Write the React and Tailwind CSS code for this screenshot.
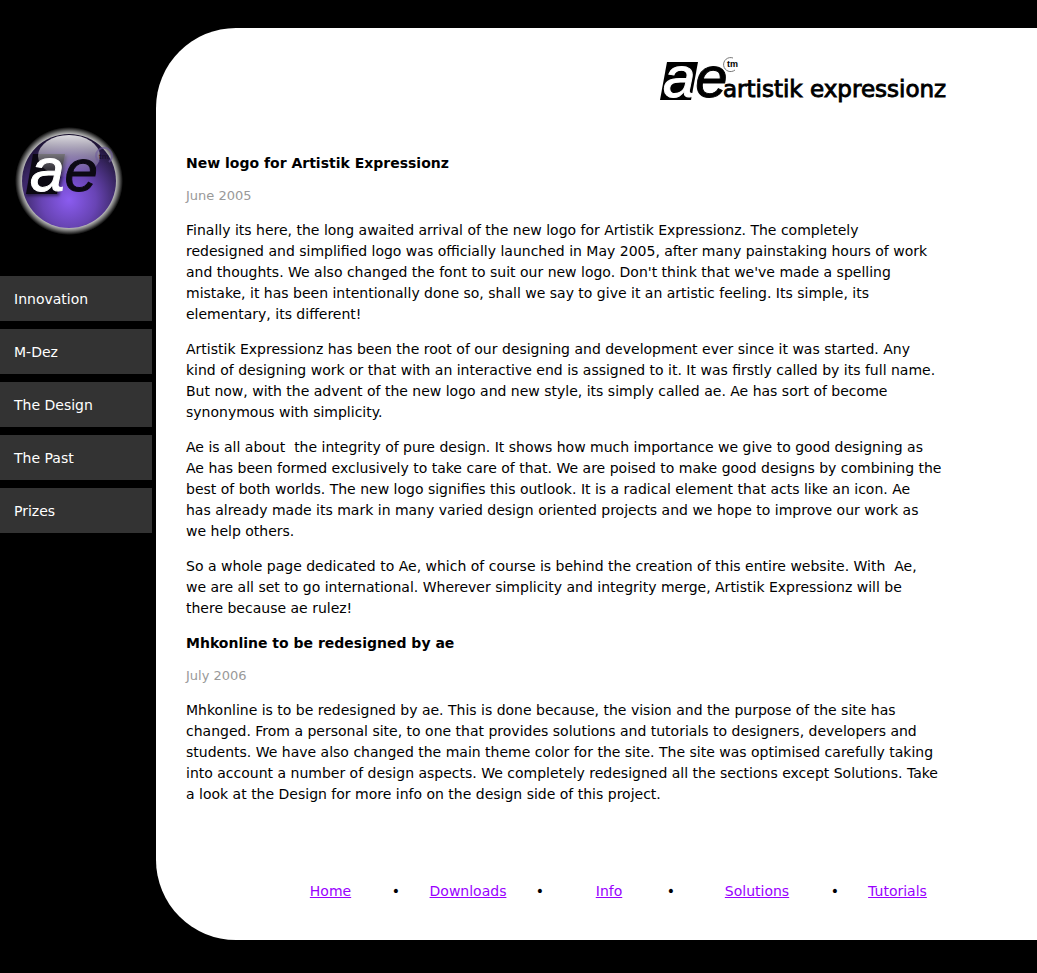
const sections = ["Innovation", "M-Dez", "The Design", "The Past", "Prizes"];

const articles = [
  {
    title: "New logo for Artistik Expressionz",
    date: "June 2005",
    paragraphs: [
      "Finally its here, the long awaited arrival of the new logo for Artistik Expressionz. The completely\nredesigned and simplified logo was officially launched in May 2005, after many painstaking hours of work\nand thoughts. We also changed the font to suit our new logo. Don't think that we've made a spelling\nmistake, it has been intentionally done so, shall we say to give it an artistic feeling. Its simple, its\nelementary, its different!",
      "Artistik Expressionz has been the root of our designing and development ever since it was started. Any\nkind of designing work or that with an interactive end is assigned to it. It was firstly called by its full name.\nBut now, with the advent of the new logo and new style, its simply called ae. Ae has sort of become\nsynonymous with simplicity.",
      "Ae is all about\u00a0 the integrity of pure design. It shows how much importance we give to good designing as\nAe has been formed exclusively to take care of that. We are poised to make good designs by combining the\nbest of both worlds. The new logo signifies this outlook. It is a radical element that acts like an icon. Ae\nhas already made its mark in many varied design oriented projects and we hope to improve our work as\nwe help others.",
      "So a whole page dedicated to Ae, which of course is behind the creation of this entire website. With\u00a0 Ae,\nwe are all set to go international. Wherever simplicity and integrity merge, Artistik Expressionz will be\nthere because ae rulez!",
    ],
  },
  {
    title: "Mhkonline to be redesigned by ae",
    date: "July 2006",
    paragraphs: [
      "Mhkonline is to be redesigned by ae. This is done because, the vision and the purpose of the site has\nchanged. From a personal site, to one that provides solutions and tutorials to designers, developers and\nstudents. We have also changed the main theme color for the site. The site was optimised carefully taking\ninto account a number of design aspects. We completely redesigned all the sections except Solutions. Take\na look at the Design for more info on the design side of this project.",
    ],
  },
];

const footerLinks = ["Home", "Downloads", "Info", "Solutions", "Tutorials"];

function Orb() {
  return (
    <svg width="120" height="120" viewBox="0 0 120 120" role="img" aria-label="ae">
      <defs>
        <radialGradient id="halo">
          <stop offset="0.86" stopColor="#c8c8c8" />
          <stop offset="0.92" stopColor="#777" />
          <stop offset="1" stopColor="#000" />
        </radialGradient>
        <radialGradient id="ball" cx="0.5" cy="0.7" r="0.72">
          <stop offset="0" stopColor="#8b5cf0" />
          <stop offset="0.4" stopColor="#6844b4" />
          <stop offset="0.8" stopColor="#2e1f50" />
          <stop offset="1" stopColor="#140c26" />
        </radialGradient>
        <linearGradient id="gloss" x1="0" y1="0" x2="0" y2="1">
          <stop offset="0" stopColor="#fff" stopOpacity="0.85" />
          <stop offset="0.5" stopColor="#fff" stopOpacity="0.4" />
          <stop offset="1" stopColor="#fff" stopOpacity="0.04" />
        </linearGradient>
        <filter id="soft" x="-20%" y="-20%" width="140%" height="140%">
          <feGaussianBlur stdDeviation="1.5" />
        </filter>
      </defs>
      <circle cx="59" cy="61" r="54" fill="url(#halo)" />
      <circle cx="59" cy="61" r="47" fill="url(#ball)" />
      <path d="M24 35 L57 35 L49 76 L16 76 Z" fill="#000" opacity="0.5" filter="url(#soft)" />
      <path d="M23 34 L55 34 L47 74 L16 74 Z" fill="#0b0812" />
      <ellipse cx="59" cy="36" rx="31" ry="21" fill="url(#gloss)" />
      <text x="20" y="71" fontFamily="Liberation Sans, sans-serif" fontStyle="italic" fontSize="62" fill="#fff" stroke="#fff" strokeWidth="1">
        a<tspan fontSize="60" fill="#0c0914" stroke="#0c0914" strokeWidth="1">e</tspan>
      </text>
      <path d="M89 42 A8 8 0 1 1 99 42" fill="none" stroke="#6e5a9c" strokeWidth="2" opacity="0.6" />
      <text x="89" y="39" fontFamily="Liberation Sans, sans-serif" fontWeight="bold" fontSize="8" fill="#1b1230">tm</text>
    </svg>
  );
}

function Wordmark() {
  return (
    <svg width="292" height="86" viewBox="4 -21 292 86" role="img" aria-label="ae artistik expressionz">
      <path d="M14 5 L45 5 L38 43 L7 43 Z" fill="#000" />
      <text x="10" y="40" fontFamily="Liberation Sans, sans-serif" fontStyle="italic" fontSize="58" fill="#fff" stroke="#fff" strokeWidth="1">
        a<tspan fill="#000" stroke="#000" strokeWidth="1">e</tspan>
      </text>
      <path d="M80 1 A7 7 0 1 0 82 13" fill="none" stroke="#777" strokeWidth="1" />
      <text x="74" y="10" fontFamily="Liberation Sans, sans-serif" fontWeight="bold" fontSize="9" fill="#000">tm</text>
      <text x="70" y="40" fontFamily="DejaVu Sans, sans-serif" fontSize="23" fill="#000" stroke="#000" strokeWidth="0.9">artistik expressionz</text>
    </svg>
  );
}

export default function App() {
  return (
    <div className="flex min-h-screen bg-black pt-7 pb-[33px] font-['Verdana','DejaVu_Sans',sans-serif] text-[14px] leading-[21px] text-black">
      <aside className="w-[156px] shrink-0 pt-[92px]">
        <div className="pl-[10px]">
          <Orb />
        </div>
        <nav aria-label="Sections" className="mt-9 mr-1 flex flex-col gap-2">
          {sections.map((name) => (
            <a key={name} href="#" className="bg-[#333] px-[14px] pt-[13px] pb-[11px] text-white">
              {name}
            </a>
          ))}
        </nav>
      </aside>
      <div className="min-w-0 flex-1 rounded-l-[80px] bg-white pr-[82px] pb-9 pl-[30px]">
        <header className="flex justify-end pt-2 pr-[6px]">
          <Wordmark />
        </header>
        <main className="flex flex-col gap-[14px] pt-[31px]">
          {articles.map((article) => (
            <article key={article.title} className="flex flex-col gap-[14px]">
              <div className="flex flex-col gap-[11px]">
                <h2 className="font-bold">{article.title}</h2>
                <p className="text-[13px] text-[#999]">{article.date}</p>
              </div>
              {article.paragraphs.map((text) => (
                <p key={text} className="whitespace-pre-line">
                  {text}
                </p>
              ))}
            </article>
          ))}
        </main>
        <footer className="mt-[76px] ml-[99px] grid grid-cols-[91fr_40fr_104fr_40fr_98fr_26fr_146fr_10fr_115fr] text-center">
          {footerLinks.flatMap((name, i) => [
            i > 0 && (
              <span key={name + "-dot"} className="flex justify-center">
                •
              </span>
            ),
            <div key={name}>
              <a href="#" className="text-[#9900ff] underline">
                {name}
              </a>
            </div>,
          ])}
        </footer>
      </div>
    </div>
  );
}
